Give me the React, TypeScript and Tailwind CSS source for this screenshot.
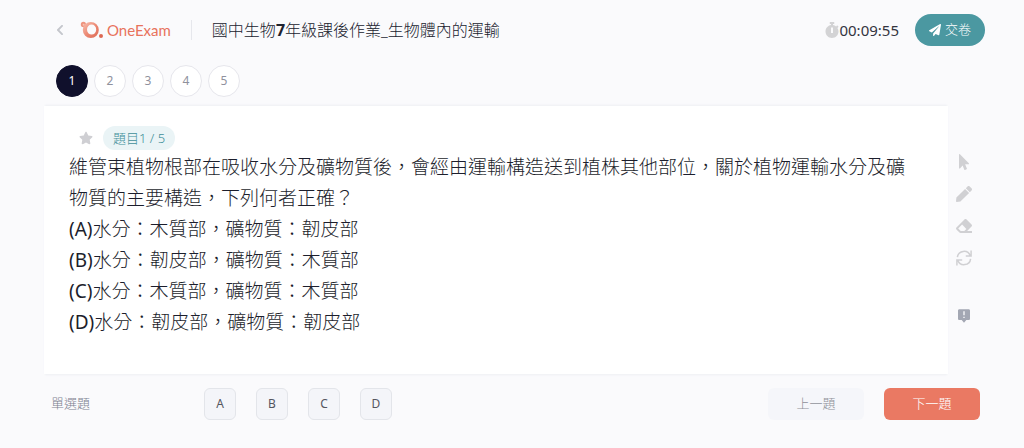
import { useState } from "react";
import { clsx } from "clsx";
import {
  FaChevronLeft,
  FaEraser,
  FaMousePointer,
  FaPaperPlane,
  FaPen,
  FaStar,
  FaStopwatch,
} from "react-icons/fa";
import { BiSolidMessageAltError } from "react-icons/bi";

const questions = [1, 2, 3, 4, 5];

const stem =
  "維管束植物根部在吸收水分及礦物質後，會經由運輸構造送到植株其他部位，關於植物運輸水分及礦物質的主要構造，下列何者正確？";

const choices = [
  { key: "A", text: "水分：木質部，礦物質：韌皮部" },
  { key: "B", text: "水分：韌皮部，礦物質：木質部" },
  { key: "C", text: "水分：木質部，礦物質：木質部" },
  { key: "D", text: "水分：韌皮部，礦物質：韌皮部" },
];

const ResetIcon = ({ className }: { className?: string }) => (
  <svg
    viewBox="0 0 16 16"
    className={className}
    fill="none"
    stroke="currentColor"
    strokeWidth="1.5"
    aria-hidden="true"
  >
    <path d="M1.4 7.2A6.6 6.6 0 0 1 14.2 5.8M15.1 0.5V6H9.8" />
    <path d="M14.6 8.8A6.6 6.6 0 0 1 1.8 10.2M0.9 15.5V10H6.2" />
  </svg>
);

const tools = [
  { name: "選取", icon: FaMousePointer },
  { name: "畫筆", icon: FaPen },
  { name: "橡皮擦", icon: FaEraser },
  { name: "重置", icon: ResetIcon },
];

const Logo = () => (
  <a href="#" className="flex items-center gap-[3px] text-[#e8735c]">
    <svg viewBox="0 0 24 20" className="h-5 w-6" aria-hidden="true">
      <defs>
        <linearGradient id="ring" x1="0" y1="0" x2="1" y2="1">
          <stop offset="0" stopColor="#f8c4b5" />
          <stop offset="0.5" stopColor="#ec8a75" />
          <stop offset="1" stopColor="#dc6853" />
        </linearGradient>
      </defs>
      <circle cx="3.4" cy="4.4" r="2.6" fill="#ee947f" />
      <circle cx="3.6" cy="4.8" r="1" fill="#f8c4b5" />
      <path
        fill="url(#ring)"
        fillRule="evenodd"
        d="M10.8 2a8 8 0 1 1 0 16a8 8 0 1 1 0-16zM11.6 4.6a4.6 5 0 1 0 0 10a4.6 5 0 1 0 0-10z"
      />
      <circle cx="21" cy="16" r="2" fill="#dc6853" />
    </svg>
    <span className="font-['Lato'] text-[15px] leading-5">OneExam</span>
  </a>
);

const Header = () => (
  <header className="flex items-center pt-3.5 pr-[39px] pl-14">
    <button type="button" aria-label="返回" className="mr-4 text-[#c4c6cc]">
      <FaChevronLeft className="h-3 w-2" />
    </button>
    <Logo />
    <span className="mx-5 h-5 w-px bg-[#e6e7ec]" />
    <h1 className="text-base font-light text-[#20222e]">
      國中生物<b className="font-bold">7</b>年級課後作業_生物體內的運輸
    </h1>
    <div className="ml-auto flex items-center">
      <FaStopwatch className="h-4 w-3.5 text-[#d3d3d5]" />
      <time className="text-[15px]">00:09:55</time>
      <button
        type="button"
        className="ml-4 flex h-8 items-center gap-1 rounded-full bg-[#4b98a1] px-3.5 text-[13px] font-light text-white"
      >
        <FaPaperPlane className="h-3 w-3" />
        交卷
      </button>
    </div>
  </header>
);

const App = () => {
  const [current, setCurrent] = useState(1);

  return (
    <div className="min-h-screen bg-[#fafafc] font-['Noto_Sans','Noto_Sans_CJK_TC',sans-serif] text-[#33343f]">
      <Header />
      <nav className="flex gap-1.5 pt-[19px] pb-[9px] pl-14">
        {questions.map((number) => (
          <button
            key={number}
            type="button"
            onClick={() => setCurrent(number)}
            className={clsx(
              "h-8 w-8 rounded-full border text-xs",
              number === current
                ? "border-[#10102c] bg-[#10102c] text-white"
                : "border-[#e6e6ec] bg-white text-[#8f919d]"
            )}
          >
            {number}
          </button>
        ))}
      </nav>
      <div className="flex">
        <main className="ml-11 flex-1 bg-white px-[25px] pt-5 pb-9 shadow-[0_-2px_2px_-1px_#eeeff3,0_2px_2px_-1px_#eeeff3]">
          <div className="flex items-center gap-2.5 pl-2.5">
            <button type="button" aria-label="標記" className="text-[#cfcfd3]">
              <FaStar className="h-3.5 w-3.5" />
            </button>
            <span className="rounded-full bg-[#eaf4f6] px-2.5 text-[13px] leading-6 font-light text-[#3f8f99]">
              題目{current} / 5
            </span>
          </div>
          <div className="mt-0.5 text-[19px] leading-[31px] font-light text-[#1c1e2c]">
            <p>{stem}</p>
            {choices.map(({ key, text }) => (
              <p key={key}>
                <span className="font-normal">({key})</span>
                {text}
              </p>
            ))}
          </div>
        </main>
        <aside className="flex w-[76px] flex-col gap-4 pt-12 pl-2 text-[#d0d0d3]">
          {tools.map(({ name, icon: Icon }) => (
            <button key={name} type="button" aria-label={name} className="w-4">
              <Icon className="h-4 w-4" />
            </button>
          ))}
          <button type="button" aria-label="回報問題" className="mt-[26px] w-4 text-[#a3a7b3]">
            <BiSolidMessageAltError className="h-4 w-4" />
          </button>
        </aside>
      </div>
      <footer className="flex items-center py-3.5 pr-11 pl-[51px] text-[13px]">
        <span className="w-[153px] font-light text-[#7d8290]">單選題</span>
        <div className="flex gap-5">
          {choices.map(({ key }) => (
            <button
              key={key}
              type="button"
              className="h-8 w-8 rounded-md border border-[#e3e5ea] bg-[#f4f5f9] text-xs text-[#55565f]"
            >
              {key}
            </button>
          ))}
        </div>
        <button
          type="button"
          className="ml-auto h-8 w-24 rounded-md bg-[#f5f6fa] font-light text-[#8e9098]"
        >
          上一題
        </button>
        <button type="button" className="ml-5 h-8 w-24 rounded-md bg-[#ea7963] font-light text-white">
          下一題
        </button>
      </footer>
    </div>
  );
};

export default App;
